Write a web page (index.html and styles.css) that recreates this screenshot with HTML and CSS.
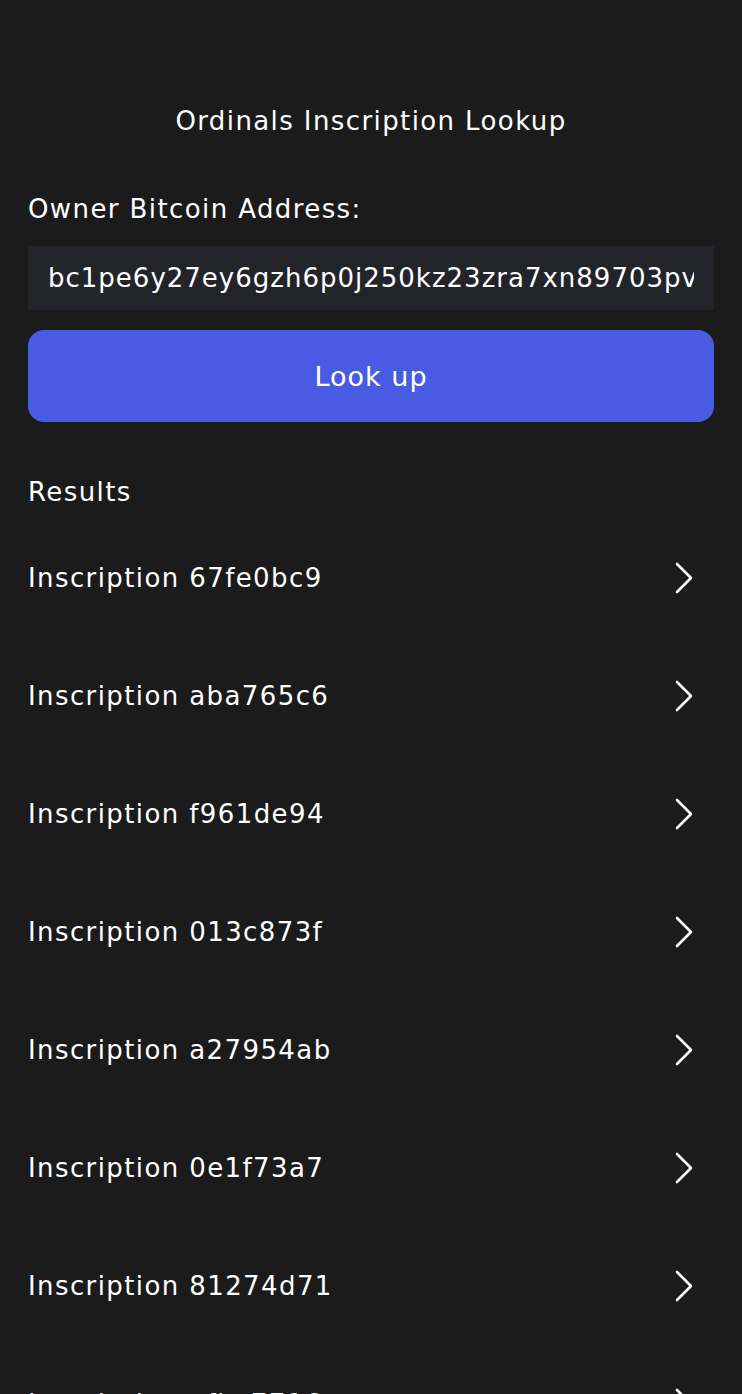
FILE: index.html
```html
<!DOCTYPE html>
<html lang="en">
<head>
<meta charset="utf-8">
<title>Ordinals Inscription Lookup</title>
<link rel="stylesheet" href="styles.css">
</head>
<body>
<main class="screen">
  <h1 class="title">Ordinals Inscription Lookup</h1>
  <label class="label" for="addr">Owner Bitcoin Address:</label>
  <div class="input-box">
    <input id="addr" class="input" type="text" value="bc1pe6y27ey6gzh6p0j250kz23zra7xn89703pvmtzx239zzstg47j3s3vdvvs" readonly>
  </div>
  <button class="btn" type="button">Look up</button>
  <h2 class="results-title">Results</h2>
  <ul class="list">
    <li class="row"><span>Inscription 67fe0bc9</span><svg class="chev" viewBox="0 0 20 34"><path d="M3 3 L17 17 L3 31"/></svg></li>
    <li class="row"><span>Inscription aba765c6</span><svg class="chev" viewBox="0 0 20 34"><path d="M3 3 L17 17 L3 31"/></svg></li>
    <li class="row"><span>Inscription f961de94</span><svg class="chev" viewBox="0 0 20 34"><path d="M3 3 L17 17 L3 31"/></svg></li>
    <li class="row"><span>Inscription 013c873f</span><svg class="chev" viewBox="0 0 20 34"><path d="M3 3 L17 17 L3 31"/></svg></li>
    <li class="row"><span>Inscription a27954ab</span><svg class="chev" viewBox="0 0 20 34"><path d="M3 3 L17 17 L3 31"/></svg></li>
    <li class="row"><span>Inscription 0e1f73a7</span><svg class="chev" viewBox="0 0 20 34"><path d="M3 3 L17 17 L3 31"/></svg></li>
    <li class="row"><span>Inscription 81274d71</span><svg class="chev" viewBox="0 0 20 34"><path d="M3 3 L17 17 L3 31"/></svg></li>
    <li class="row"><span>Inscription afbc7716</span><svg class="chev" viewBox="0 0 20 34"><path d="M3 3 L17 17 L3 31"/></svg></li>
  </ul>
</main>
</body>
</html>
```
FILE: styles.css
```css
html, body {
  margin: 0;
  padding: 0;
  background: #1b1b1b;
  height: 100%;
  overflow: hidden;
}
body {
  font-family: "DejaVu Sans", "Noto Sans", sans-serif;
  color: #ffffff;
  letter-spacing: 1.4px;
}
.screen {
  display: flex;
  flex-direction: column;
  padding: 0 28px;
}
.title {
  margin: 100px 0 0;
  height: 42px;
  line-height: 42px;
  text-align: center;
  font-size: 26px;
  font-weight: 400;
}
.label {
  margin-top: 46px;
  height: 42px;
  line-height: 42px;
  font-size: 26px;
}
.input-box {
  margin-top: 16px;
  height: 64px;
  background: #23242a;
  display: flex;
  align-items: center;
  padding: 0 20px;
}
.input {
  flex: 1;
  min-width: 0;
  background: transparent;
  border: 0;
  outline: none;
  padding: 0;
  color: #ffffff;
  font-family: inherit;
  letter-spacing: 1px;
  font-size: 26px;
}
.btn {
  margin-top: 20px;
  height: 92px;
  border: 0;
  border-radius: 16px;
  background: #4a5be3;
  color: #ffffff;
  font-family: inherit;
  letter-spacing: 1px;
  font-size: 27px;
}
.results-title {
  margin: 49px 0 0;
  height: 42px;
  line-height: 42px;
  font-size: 26px;
  font-weight: 400;
}
.list {
  list-style: none;
  margin: 44px 0 0;
  padding: 0;
  display: flex;
  flex-direction: column;
  gap: 76px;
}
.row {
  height: 42px;
  display: flex;
  align-items: center;
  justify-content: space-between;
  font-size: 26px;
  padding-right: 20px;
}
.chev {
  width: 20px;
  height: 34px;
  fill: none;
  stroke: #ffffff;
  stroke-width: 2.6;
  stroke-linecap: round;
  stroke-linejoin: round;
}
```
